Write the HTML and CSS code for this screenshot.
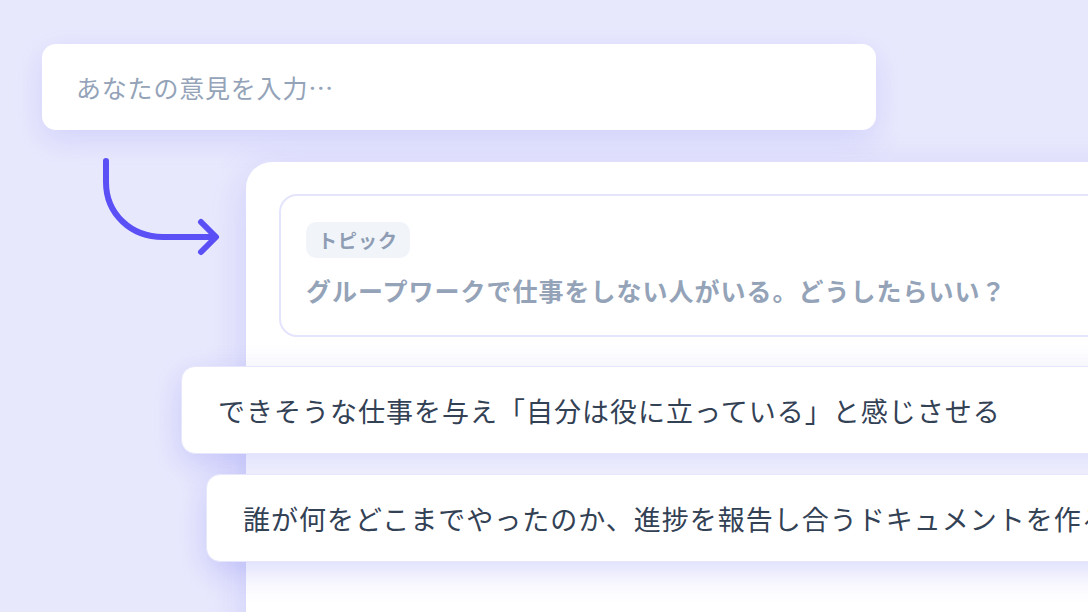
FILE: index.html
```html
<!DOCTYPE html>
<html lang="ja">
<head>
  <meta charset="UTF-8">
  <title>意見の整理</title>
  <link rel="stylesheet" href="styles.css">
</head>
<body>
  <div class="stage">
    <div class="opinion-input">あなたの意見を入力…</div>

    <div class="flow-row">
      <svg class="flow-arrow" width="130" height="112" viewBox="96 150 130 112" fill="none">
        <path d="M106 161 L106 182 C106 214 131 237 163 237 L215 237" stroke="#5b4ff6" stroke-width="6" stroke-linecap="round" stroke-linejoin="round"/>
        <path d="M201 222 L216 237 L201 252" stroke="#5b4ff6" stroke-width="6" stroke-linecap="round" stroke-linejoin="round"/>
      </svg>

      <div class="board">
        <div class="topic-card">
          <span class="topic-tag">トピック</span>
          <div class="topic-text">グループワークで仕事をしない人がいる。どうしたらいい？</div>
        </div>

        <div class="answer answer-first">できそうな仕事を与え「自分は役に立っている」と感じさせる</div>
        <div class="answer answer-second">誰が何をどこまでやったのか、進捗を報告し合うドキュメントを作る</div>
      </div>
    </div>
  </div>
</body>
</html>
```

FILE: styles.css
```css
html, body {
  margin: 0;
  height: 100%;
}
body {
  background-color: #e8e8fd;
  font-family: "Noto Sans CJK JP", "Noto Sans", sans-serif;
  overflow: hidden;
}
.stage {
  width: 1088px;
  height: 612px;
  overflow: hidden;
  padding-top: 44px;
  box-sizing: border-box;
}
.opinion-input {
  margin-left: 42px;
  width: 834px;
  height: 86px;
  box-sizing: border-box;
  padding-left: 34px;
  display: flex;
  align-items: center;
  background-color: #fff;
  border-radius: 14px;
  box-shadow: 0 10px 30px rgba(99, 102, 241, 0.16);
  color: #94a3b8;
  font-size: 25px;
  letter-spacing: 0.8px;
}
.flow-row {
  display: flex;
  align-items: flex-start;
}
.flow-arrow {
  margin-left: 96px;
  margin-top: 20px;
  flex-shrink: 0;
}
.board {
  margin-left: 20px;
  margin-top: 32px;
  width: 1000px;
  height: 600px;
  flex-shrink: 0;
  box-sizing: border-box;
  padding: 32px 0 0 33px;
  background-color: #fff;
  border-radius: 26px;
  box-shadow: 0 10px 40px rgba(99, 102, 241, 0.2);
}
.topic-card {
  height: 143px;
  box-sizing: border-box;
  padding: 26px 25px 0;
  border: 2px solid #e4e4fd;
  border-radius: 18px;
}
.topic-tag {
  display: inline-block;
  height: 36px;
  line-height: 36px;
  padding: 0 12px;
  background-color: #f1f5f9;
  border-radius: 10px;
  color: #8f9db4;
  font-size: 19px;
  font-weight: bold;
  letter-spacing: 1px;
}
.topic-text {
  margin-top: 15px;
  line-height: 34px;
  color: #94a3b8;
  font-size: 25px;
  font-weight: bold;
  letter-spacing: 1px;
}
.answer {
  height: 88px;
  box-sizing: border-box;
  display: flex;
  align-items: center;
  background-color: #fff;
  border: 1px solid #e7e7fc;
  border-radius: 14px;
  box-shadow: 0 10px 30px rgba(99, 102, 241, 0.24);
  color: #334155;
  font-size: 27px;
  letter-spacing: 1px;
  white-space: nowrap;
}
.answer-first {
  margin: 29px 0 0 -98px;
  padding-left: 36px;
}
.answer-second {
  margin: 20px 0 0 -73px;
  padding-left: 36px;
}
```
